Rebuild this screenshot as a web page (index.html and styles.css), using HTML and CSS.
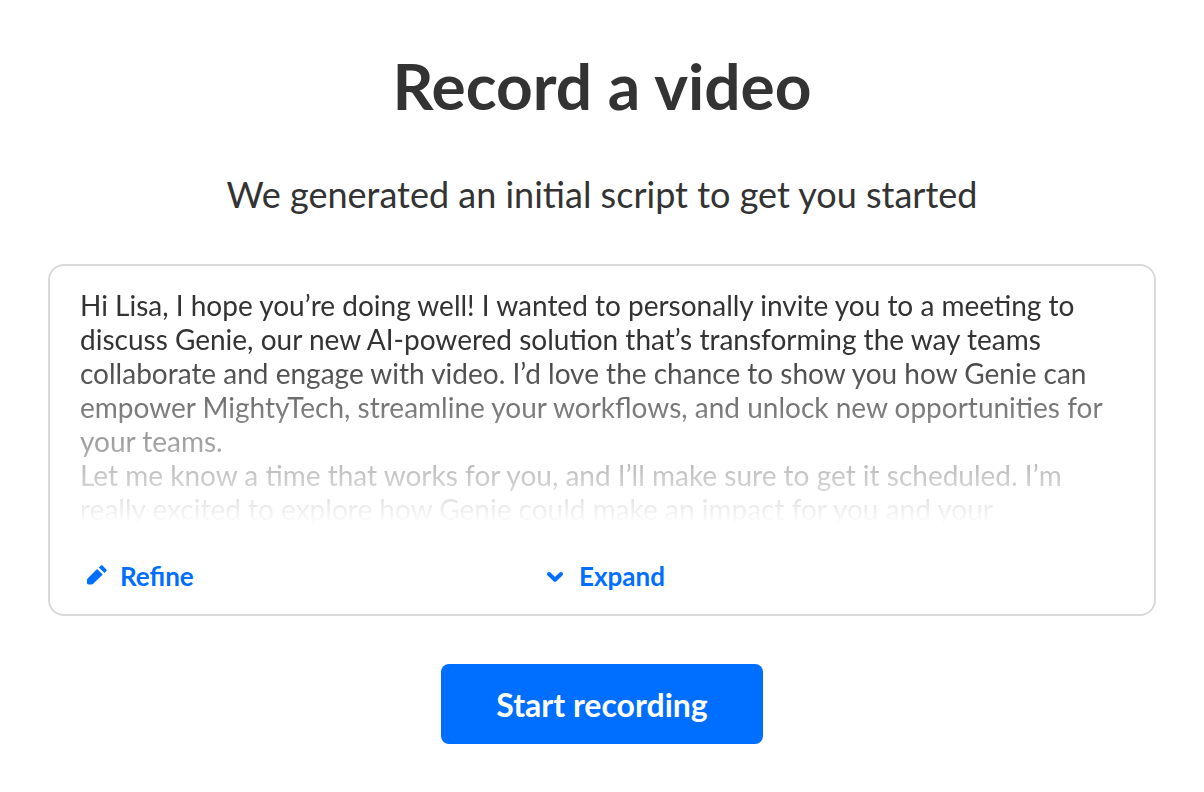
FILE: index.html
```html
<!DOCTYPE html>
<html lang="en">
<head>
<meta charset="utf-8">
<meta name="viewport" content="width=device-width, initial-scale=1">
<title>Record a video</title>
<link rel="stylesheet" href="styles.css">
</head>
<body>
<main class="page">
  <h1 class="title">Record a video</h1>
  <p class="subtitle">We generated an initial script to get you started</p>
  <section class="card">
    <div class="script">
      <p>Hi Lisa, I hope you’re doing well! I wanted to personally invite you to a meeting to discuss Genie, our new AI-powered solution that’s transforming the way teams collaborate and engage with video. I’d love the chance to show you how Genie can empower MightyTech, streamline your workflows, and unlock new opportunities for your teams.</p>
      <p>Let me know a time that works for you, and I’ll make sure to get it scheduled. I’m really excited to explore how Genie could make an impact for you and your</p>
    </div>
    <div class="actions">
      <button class="link refine" type="button">
        <svg class="icon" viewBox="0 0 24 24" aria-hidden="true"><path d="M3 19V15.800Q3 15 3.600 14.400L13.100 4.900 18.700 10.500 9.200 19.800Q8.600 20.400 7.800 20.400H4.200Q3 20.400 3 19zM14.900 3.500L16.800 1.600Q17.700 .8 18.500 1.600L22.300 5.400Q23.100 6.300 22.300 7.200L20.400 9.100z"/></svg>
        Refine
      </button>
      <button class="link expand" type="button">
        <svg class="icon" viewBox="0 0 24 24" aria-hidden="true"><path class="stroke" d="M6 10l6 5.800 6-5.800"/></svg>
        Expand
      </button>
    </div>
  </section>
  <button class="start" type="button">Start recording</button>
</main>
</body>
</html>
```
FILE: styles.css
```css
* {
  box-sizing: border-box;
}

body {
  margin: 0;
  background: #fff;
  color: #333;
  font-family: Lato, "Liberation Sans", sans-serif;
}

.page {
  display: flex;
  flex-direction: column;
  align-items: center;
  padding: 46px 48px 48px;
}

.title {
  margin: 0;
  font-size: 64px;
  line-height: 80px;
  font-weight: 700;
}

.subtitle {
  margin: 44px 0 46px;
  font-size: 36px;
  line-height: 48px;
}

.card {
  width: 100%;
  padding: 22px 30px 18px;
  border: 2px solid #d9d9d9;
  border-radius: 16px;
}

.script {
  font-size: 28px;
  line-height: 34px;
  -webkit-mask-image: linear-gradient(#000 60px, transparent 236px);
  mask-image: linear-gradient(#000 60px, transparent 236px);
}

.script p {
  margin: 0;
}

.actions {
  display: grid;
  grid-template-columns: 1fr auto 1fr;
  margin-top: 30px;
}

.link {
  display: flex;
  align-items: center;
  justify-self: start;
  gap: 12px;
  padding: 0 4px;
  border: 0;
  background: none;
  color: #006eff;
  font: 700 26px/40px Lato, "Liberation Sans", sans-serif;
  cursor: pointer;
}

.expand {
  padding-right: 0;
}

.icon {
  width: 24px;
  height: 24px;
  fill: currentColor;
}

.stroke {
  fill: none;
  stroke: currentColor;
  stroke-width: 4;
  stroke-linecap: round;
  stroke-linejoin: round;
}

.start {
  width: 322px;
  margin-top: 48px;
  padding: 2px 0 0;
  border: 0;
  border-radius: 8px;
  background: #006eff;
  color: #fff;
  font: 700 32px/78px Lato, "Liberation Sans", sans-serif;
  cursor: pointer;
}
```
